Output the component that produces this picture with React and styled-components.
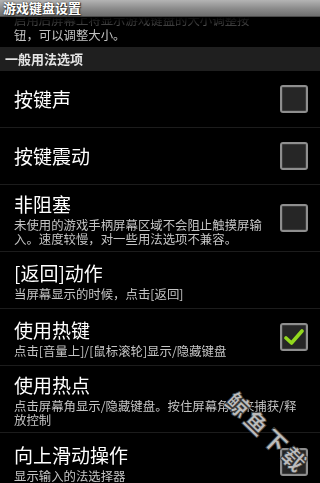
import React from "react";
import styled, { createGlobalStyle } from "styled-components";

const GlobalStyle = createGlobalStyle`
  html, body {
    margin: 0;
    padding: 0;
    background: #000;
  }
  body {
    font-family: "Noto Sans CJK SC", "Noto Sans", sans-serif;
  }
`;

const prefs = [
  { title: "按键声", checkbox: false },
  { title: "按键震动", checkbox: false },
  {
    title: "非阻塞",
    summary: "未使用的游戏手柄屏幕区域不会阻止触摸屏输入。速度较慢，对一些用法选项不兼容。",
    checkbox: false
  },
  { title: "[返回]动作", summary: "当屏幕显示的时候，点击[返回]" },
  {
    title: "使用热键",
    summary: "点击[音量上]/[鼠标滚轮]显示/隐藏键盘",
    checkbox: true
  },
  {
    title: "使用热点",
    summary: "点击屏幕角显示/隐藏键盘。按住屏幕角落来捕获/释\n放控制"
  },
  { title: "向上滑动操作", summary: "显示输入的法选择器", checkbox: false }
];

const Screen = styled.div`
  position: relative;
  width: 320px;
  height: 483px;
  overflow: hidden;
  background: #000;
  display: flex;
  flex-direction: column;
`;

const TitleBar = styled.div`
  height: 17px;
  flex-shrink: 0;
  box-sizing: border-box;
  padding-left: 3px;
  background: linear-gradient(#b4b4b4, #8a8a8a 55%, #6e6e6e);
  border-bottom: 1px solid #4a4a4a;
  color: #fff;
  font-size: 13px;
  font-weight: 700;
  line-height: 16px;
  text-shadow: 0 0 2px #222, 1px 1px 1px #333;
`;

/* list with the Android top fading edge */
const Scroller = styled.div`
  flex: 1;
  overflow: hidden;
  -webkit-mask-image: linear-gradient(to bottom, transparent 0, rgba(0,0,0,0.35) 8px, #000 14px);
  mask-image: linear-gradient(to bottom, transparent 0, rgba(0,0,0,0.35) 8px, #000 14px);
`;

const List = styled.div`
  margin-top: -4px;
`;

const Category = styled.div`
  height: 24px;
  box-sizing: border-box;
  padding-left: 5px;
  background: #1f1f1f;
  color: #e4e4e4;
  font-size: 13px;
  font-weight: 700;
  line-height: 24px;
`;

const Row = styled.div`
  display: flex;
  align-items: center;
  box-sizing: border-box;
  padding: ${p => (p.$clipped ? "0 12px 4px 14px" : "5px 12px 5px 14px")};
  border-bottom: ${p => (p.$last ? "none" : "1px solid #1c1c1c")};
  min-height: ${p => (p.$clipped ? "auto" : "57px")};
`;

const Texts = styled.div`
  flex: 1;
  min-width: 0;
  padding-right: ${p => (p.$withBox ? "10px" : "0")};
`;

const Title = styled.div`
  color: #fff;
  font-size: 19px;
  line-height: 28px;
  white-space: nowrap;
`;

const Summary = styled.div`
  color: #c4c4c4;
  font-size: 12.4px;
  white-space: pre-line;
  line-height: ${p => (p.$loose ? "15px" : "14px")};
`;

const Box = styled.div`
  flex-shrink: 0;
  width: 28px;
  height: 28px;
  box-sizing: border-box;
  border: 2px solid #8e8e8e;
  border-radius: 3px;
  background: #262626;
  box-shadow: inset 0 0 0 1px #3a3a3a;
  display: flex;
  align-items: center;
  justify-content: center;
`;

const Watermark = styled.div`
  position: absolute;
  left: 230px;
  top: 385px;
  transform: rotate(44deg);
  transform-origin: left center;
  color: #bcbcbc;
  font-size: 23px;
  line-height: 23px;
  font-weight: 900;
  letter-spacing: 3px;
  white-space: nowrap;
  -webkit-text-stroke: 0.8px #3a3a3a;
  text-shadow: 0 0 2px #000;
  pointer-events: none;
`;

const Check = () => (
  <svg width="20" height="18" viewBox="0 0 20 18">
    <path
      d="M2 10 L7.5 15 L18 3"
      fill="none"
      stroke="#92d81e"
      strokeWidth="3.6"
      strokeLinecap="round"
      strokeLinejoin="round"
    />
  </svg>
);

const Pref = ({ title, summary, checkbox, last }) => {
  const withBox = checkbox !== undefined;
  return (
    <Row $last={last}>
      <Texts $withBox={withBox}>
        <Title>{title}</Title>
        {summary && <Summary>{summary}</Summary>}
      </Texts>
      {withBox && <Box>{checkbox && <Check />}</Box>}
    </Row>
  );
};

export default function App() {
  return (
    <Screen>
      <GlobalStyle />
      <TitleBar>游戏键盘设置</TitleBar>
      <Scroller>
        <List>
          <Row $clipped $last>
            <Texts>
              <Summary $loose>
                {"启用后屏幕上将显示游戏键盘的大小调整按\n钮，可以调整大小。"}
              </Summary>
            </Texts>
          </Row>
          <Category>一般用法选项</Category>
          {prefs.map((p, i) => (
            <Pref key={p.title} {...p} last={i === prefs.length - 1} />
          ))}
        </List>
      </Scroller>
      <Watermark>鲸鱼下载</Watermark>
    </Screen>
  );
}
